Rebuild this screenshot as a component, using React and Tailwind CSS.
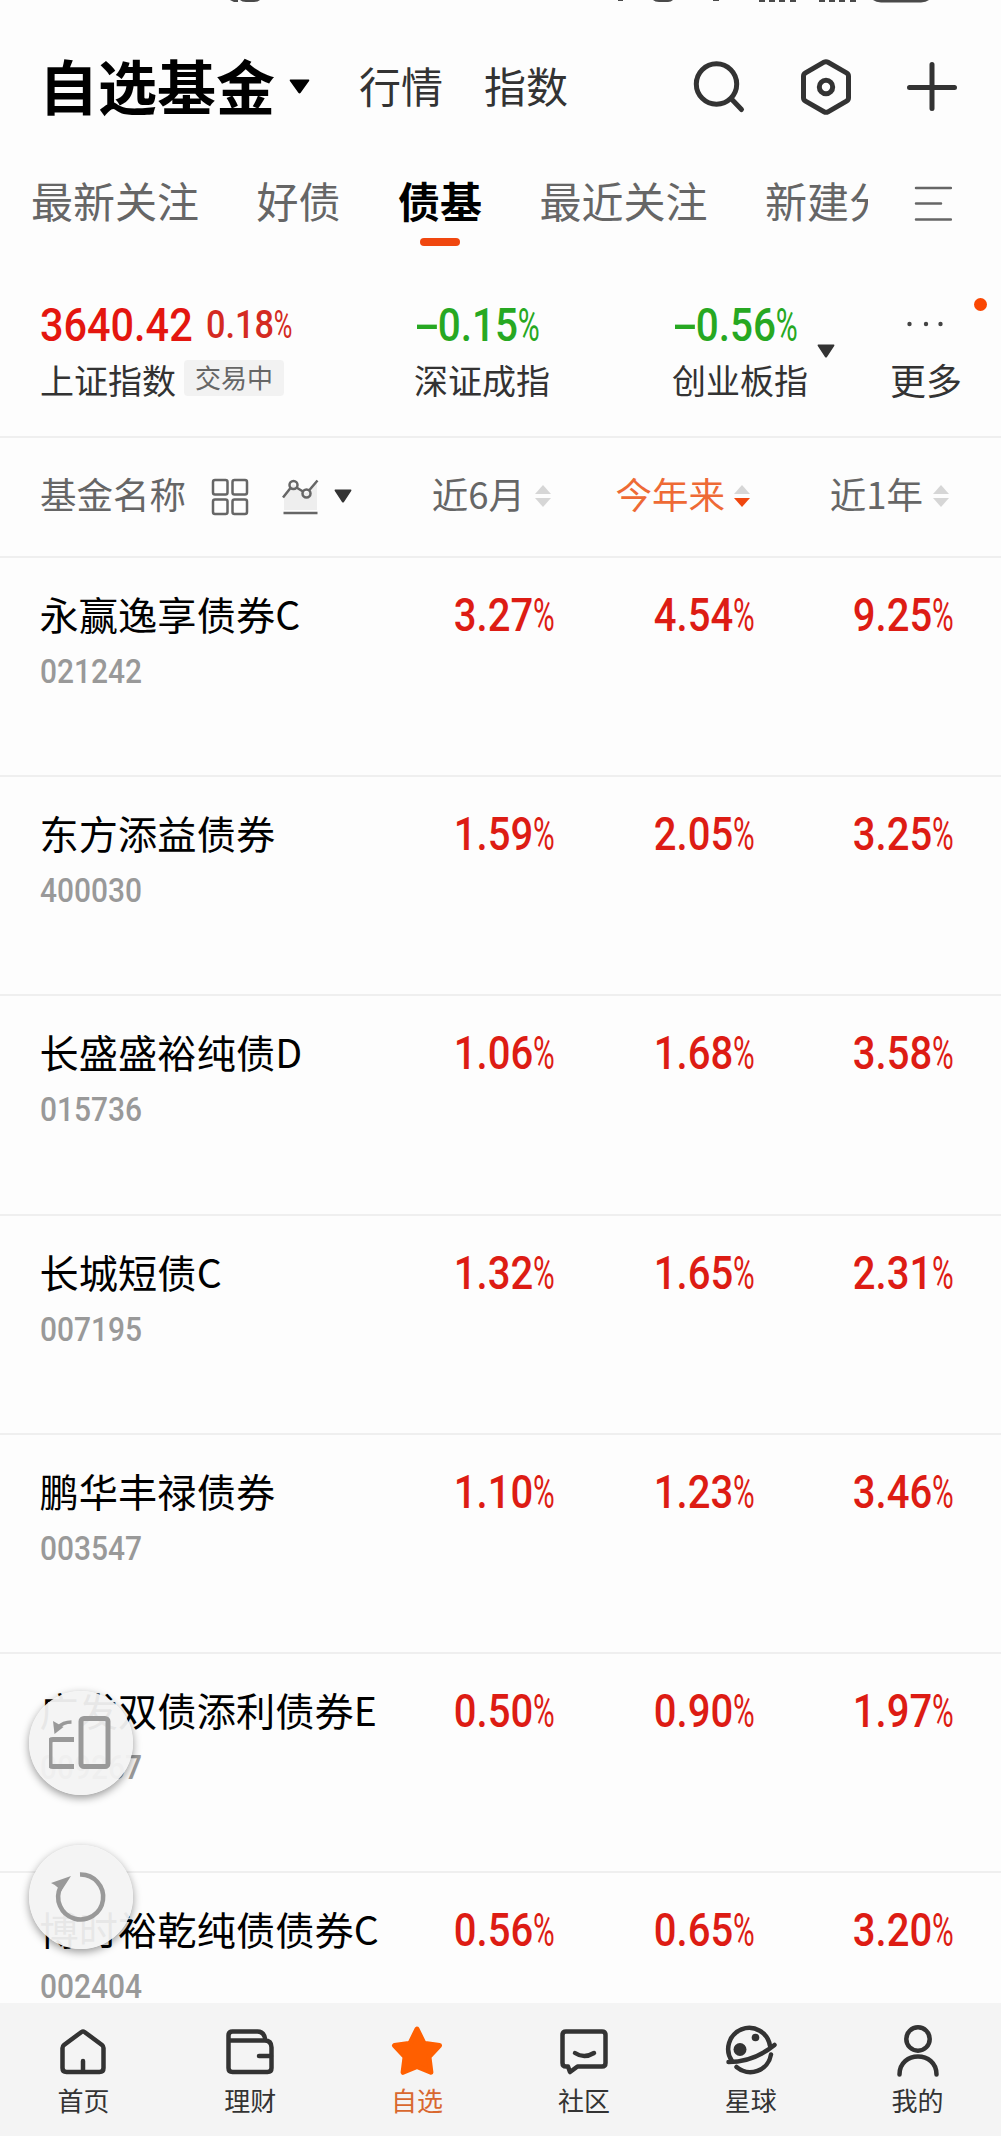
import React from 'react';

const tabs = ['最新关注', '好债', '债基', '最近关注', '新建分'];

const funds = [
  { name: '永赢逸享债券C', code: '021242', values: ['3.27', '4.54', '9.25'] },
  { name: '东方添益债券', code: '400030', values: ['1.59', '2.05', '3.25'] },
  { name: '长盛盛裕纯债D', code: '015736', values: ['1.06', '1.68', '3.58'] },
  { name: '长城短债C', code: '007195', values: ['1.32', '1.65', '2.31'] },
  { name: '鹏华丰禄债券', code: '003547', values: ['1.10', '1.23', '3.46'] },
  { name: '广发双债添利债券E', code: '009267', values: ['0.50', '0.90', '1.97'] },
  { name: '博时裕乾纯债债券C', code: '002404', values: ['0.56', '0.65', '3.20'] },
];

const Caret = ({ className }) => (
  <svg className={className} viewBox="0 0 18 14" fill="currentColor" preserveAspectRatio="none">
    <path d="M1.2 0.5h15.6q1 0.4 0.4 1.4l-7.2 11q-1 1.2-2 0l-7.2-11q-.6-1 .4-1.4z" />
  </svg>
);

const Percent = () => (
  <span className="inline-block w-[23px] origin-left scale-x-[0.74] font-normal">%</span>
);

const SortArrows = ({ active = false }) => (
  <svg className="w-[18px] h-6 shrink-0" viewBox="0 0 18 24">
    <path d="M9 1l8 9H1z" fill="#d6d6d6" />
    <path d="M9 23l8-9H1z" fill={active ? '#f0470f' : '#d6d6d6'} />
  </svg>
);

const StatusBar = () => (
  <svg className="block w-full h-[3px]" viewBox="0 0 1001 3" fill="#4a4a4a">
    <path d="M230 0h8v2h-4zM240 0h20q-2 2-6 2h-8q-4 0-6-2z" />
    <path d="M618 0h5v1h-5zM653 0h20q-2 2-5 2h-9q-4 0-6-2zM713 0h6v1h-6z" />
    <path d="M759 0h6v2h-6zM769 0h6v2h-6zM779 0h6v2h-6zM790 0h6v2h-6z" />
    <path d="M819 0h6v2h-6zM829 0h6v2h-6zM839 0h6v2h-6zM850 0h6v2h-6z" />
    <path d="M873 0h56q-3 2.4-8 2.4h-40q-5 0-8-2.4z" />
  </svg>
);

const Header = () => (
  <header className="flex items-center h-[167px] pl-[39px] pr-[43px] text-[#333]">
    <h1 className="pb-[5px] text-[59px] leading-none font-bold text-black">自选基金</h1>
    <Caret className="w-[21px] h-[15px] ml-[14px] text-black" />
    <span className="pb-[3px] ml-[49px] text-[42px] leading-none">行情</span>
    <span className="pb-[3px] ml-[41px] text-[42px] leading-none">指数</span>
    <div className="flex items-center ml-auto">
      <svg className="w-[54px] h-[54px]" viewBox="0 0 54 54" fill="none" stroke="currentColor" strokeWidth="5" strokeLinecap="round">
        <circle cx="23.500" cy="24" r="20.200" />
        <path d="M38.500 39l10 10.500" />
      </svg>
      <svg className="w-[54px] h-[58px] ml-[52px]" viewBox="0 0 54 58" fill="none" stroke="currentColor" strokeWidth="5" strokeLinejoin="round">
        <path d="M25 4.200q2-1.100 4 0l18.500 10.600q2 1.200 2 3.400v21.600q0 2.200-2 3.400l-18.500 10.600q-2 1.100-4 0l-18.500-10.600q-2-1.200-2-3.400v-21.600q0-2.200 2-3.400z" />
        <circle cx="27" cy="29" r="6.700" />
      </svg>
      <svg className="w-[52px] h-[52px] ml-[53px]" viewBox="0 0 52 52" fill="none" stroke="currentColor" strokeWidth="5" strokeLinecap="round">
        <path d="M26 3.500v44M3.500 26.500h45" />
      </svg>
    </div>
  </header>
);

const TabBar = () => (
  <nav className="flex items-start h-[92px] pl-[31px] text-[42px] leading-[60px] text-[#666]">
    <div className="flex gap-[57.500px] w-[837px] h-[92px] overflow-hidden whitespace-nowrap">
      {tabs.map((tab) =>
        tab === '债基' ? (
          <div key={tab} className="flex flex-col items-center shrink-0 font-bold text-black">
            {tab}
            <span className="w-10 h-2 mt-2 rounded-full bg-[#f0470f]" />
          </div>
        ) : (
          <div key={tab} className="shrink-0">{tab}</div>
        )
      )}
    </div>
    <svg className="w-[38px] h-9 ml-[46px] mt-4" viewBox="0 0 38 36" fill="none" stroke="#666" strokeWidth="2.500" strokeLinecap="round">
      <path d="M2 2h35M2 17.500h25M2 33.500h35" />
    </svg>
  </nav>
);

const IndexItem = ({ value, label, className }) => (
  <div className={className}>
    <div className="h-12 whitespace-nowrap font-[Roboto] text-[46px] leading-[48px] font-medium text-[#27a822]">
      <span className="inline-block origin-left scale-x-[0.88]">
        <span className="inline-block w-[27px] origin-left scale-x-[1.9]">-</span>
        {value}<Percent />
      </span>
    </div>
    <div className="mt-[7px] text-[34px] leading-[48px]">{label}</div>
  </div>
);

const IndexStrip = () => (
  <section className="flex h-[176px] pl-10 pt-[39px] border-b-2 border-[#efefef] text-[#333]">
    <div className="w-[374px]">
      <div className="flex h-12 whitespace-nowrap font-[Roboto] leading-[48px] text-[#e4160f]">
        <span className="w-[166px]">
          <span className="inline-block origin-left scale-x-[0.9] text-[46px] font-medium">3640.42</span>
        </span>
        <span className="inline-block origin-left scale-x-[0.88] text-[39px] font-medium text-[#d42a22]">
          0.18<Percent />
        </span>
      </div>
      <div className="flex mt-[7px]">
        <span className="text-[34px] leading-[48px]">上证指数</span>
        <span className="h-9 px-[11px] mt-[4px] ml-2 rounded bg-[#f2f2f2] text-[26px] leading-[34px] text-[#666]">交易中</span>
      </div>
    </div>
    <IndexItem value="0.15" label="深证成指" className="w-[258px]" />
    <IndexItem value="0.56" label="创业板指" className="w-[136px]" />
    <Caret className="w-[18px] h-[14px] mt-[43px] ml-[9px]" />
    <div className="relative flex flex-col w-[72px] ml-[55px]">
      <svg className="w-[36px] h-4 mt-[15px] ml-[17px]" viewBox="0 0 36 16" fill="#444">
        <circle cx="2.500" cy="8" r="2.200" />
        <circle cx="19" cy="8" r="2.200" />
        <circle cx="33.500" cy="8" r="2.200" />
      </svg>
      <span className="mt-[23px] text-[36px] leading-[48px]">更多</span>
      <span className="absolute -right-[25px] top-[-3px] w-[13px] h-[13px] rounded-full bg-[#fa4703]" />
    </div>
  </section>
);

const TableHead = () => (
  <div className="flex items-center h-[120px] pl-10 border-b-2 border-[#efefef] text-[36.500px] leading-none text-[#666]">
    <span className="pb-[5px]">基金名称</span>
    <svg className="w-[38px] h-[38px] ml-[25px]" viewBox="0 0 38 38" fill="none" stroke="#666" strokeWidth="2.500">
      <rect x="2" y="2" width="14.500" height="14.500" rx="2" />
      <rect x="21.500" y="2" width="14.500" height="14.500" rx="2" />
      <rect x="2" y="21.500" width="14.500" height="14.500" rx="2" />
      <rect x="21.500" y="21.500" width="14.500" height="14.500" rx="2" />
    </svg>
    <svg className="w-[38px] h-[38px] ml-[32px]" viewBox="0 0 38 38" fill="none" stroke="#666" strokeWidth="2.500">
      <path d="M3 19l9-13 13 9 11-10v27H3z" fill="#eee" stroke="none" />
      <path d="M2 19.500l7.500-9.500M15.500 9.500l6.500 4M28 12.500l8.500-10" />
      <circle cx="12.500" cy="7" r="4" />
      <circle cx="25.500" cy="15.500" r="4" />
      <path d="M2.500 35h34" />
    </svg>
    <Caret className="w-[18px] h-[14px] ml-[15px] mb-[2px] text-[#333]" />
    <div className="flex items-center justify-end gap-[9px] w-[200px] pb-[2px]"><span className="pb-[3px]">近6月</span><SortArrows /></div>
    <div className="flex items-center justify-end gap-2 w-[199px] pb-[2px] text-[#ee6a35]"><span className="pb-[3px]">今年来</span><SortArrows active /></div>
    <div className="flex items-center justify-end gap-[9px] w-[199px] pb-[2px]"><span className="pb-[3px]">近1年</span><SortArrows /></div>
  </div>
);

const FundRow = ({ fund }) => (
  <div className="flex h-[219.200px] pl-[39.500px] border-b-2 border-[#efefef]">
    <div className="w-[314.500px] pt-[26px] whitespace-nowrap">
      <div className="text-[39.200px] leading-[58px] tracking-[0.100px] text-black">{fund.name}</div>
      <div className="mt-1 font-[Roboto] text-[34px] leading-[50px] font-medium text-[#999]">
        <span className="inline-block origin-left scale-x-[0.88]">{fund.code}</span>
      </div>
    </div>
    {fund.values.map((value, i) => (
      <div key={i} className="w-[199.500px] pt-[28px] text-right whitespace-nowrap font-[Roboto] text-[46px] leading-[58px] font-medium text-[#dd1c14]">
        <span className="inline-block origin-right scale-x-[0.87]">{value}<Percent /></span>
      </div>
    ))}
  </div>
);

const FloatingButtons = () => (
  <div className="absolute left-[29px] top-[1691px] flex flex-col gap-[50px]">
    <button className="flex items-center justify-center w-[104px] h-[104px] rounded-full bg-[#f3f3f3]/95 shadow-[0_3px_8px_rgba(0,0,0,0.4)]">
      <svg className="w-16 h-[54px]" viewBox="0 0 64 54" fill="none" stroke="#999" strokeWidth="5">
        <rect x="32" y="2.500" width="27" height="48" rx="3" />
        <path d="M25 23.500H4q-3 0-3 3V47.500q0 3 3 3H25" />
        <path d="M9 11.500q5-5.500 13.500-5.500" strokeWidth="3.500" />
        <path d="M4 5l1.500 13 9-7z" fill="#999" stroke="none" />
      </svg>
    </button>
    <button className="flex items-center justify-center w-[104px] h-[104px] rounded-full bg-[#f3f3f3]/95 shadow-[0_3px_8px_rgba(0,0,0,0.4)]">
      <svg className="w-[60px] h-[56px]" viewBox="0 0 60 56" fill="none" stroke="#999" strokeWidth="4.500">
        <path d="M29 5.500a22.500 22.500 0 1 1-19.500 12.500" />
        <path d="M0 14l20-7-11 17q0-6-9-10z" fill="#999" stroke="none" />
      </svg>
    </button>
  </div>
);

const navItems = [
  {
    label: '首页',
    icon: (
      <>
        <path d="M25.500 6q1.500-1 3 0L46 19q1.500 1.200 1.500 3v20q0 4-4 4h-33q-4 0-4-4V22q0-1.800 1.500-3z" />
        <path d="M27 45V35" />
      </>
    ),
  },
  {
    label: '理财',
    icon: (
      <>
        <path d="M5.500 15V9.500q0-4 4-4h25q7 0 8 9M5.500 14.500h36q7 0 7 7V42q0 4-4 4h-35q-4 0-4-4V14" />
        <path d="M48 30H36" />
      </>
    ),
  },
  {
    label: '自选',
    active: true,
    icon: (
      <path
        d="M27 3l6.500 13.300q.6 1 1.700 1.200l14.300 2-9.800 10.500q-.8.900-.6 2l1.800 14.300-12.800-5.400q-1.100-.5-2.200 0l-12.800 5.400 1.800-14.300q.2-1.100-.6-2L4.500 19.500l14.300-2q1.100-.2 1.700-1.200z"
        fill="currentColor"
        strokeWidth="5"
        strokeLinejoin="round"
      />
    ),
  },
  {
    label: '社区',
    icon: (
      <>
        <path d="M9 5.500h36q3.500 0 3.500 3.500v28q0 3.500-3.500 3.500H20.500l-7.500 5.500-2-5.500H9q-3.500 0-3.500-3.500V9q0-3.500 3.500-3.500z" strokeLinejoin="round" />
        <path d="M18 27q9 6 19 0" />
      </>
    ),
  },
  {
    label: '星球',
    icon: (
      <>
        <path d="M8 35A21 21 0 1 1 46 20" />
        <path d="M4.500 36q25 0 46-17" />
        <path d="M47 28.500A21 21 0 0 1 12.500 41" />
        <circle cx="16" cy="23.500" r="6.500" fill="currentColor" stroke="none" />
        <circle cx="31.500" cy="11.500" r="3.800" fill="currentColor" stroke="none" />
      </>
    ),
  },
  {
    label: '我的',
    icon: (
      <>
        <circle cx="27" cy="13" r="11.700" />
        <path d="M8.500 48.500c0-24 37-24 37 0" />
      </>
    ),
  },
];

const BottomNav = () => (
  <nav className="absolute inset-x-0 bottom-0 grid grid-cols-6 h-[133px] bg-[#f4f4f4] text-[#333]">
    {navItems.map((item) => (
      <div key={item.label} className={item.active ? 'flex flex-col items-center text-[#ff5f00]' : 'flex flex-col items-center'}>
        <svg className="w-[54px] h-[54px] mt-[23px] overflow-visible" viewBox="0 0 54 54" fill="none" stroke="currentColor" strokeWidth="4.500" strokeLinecap="round">
          {item.icon}
        </svg>
        <span className={item.active ? 'mt-[2px] text-[26px] leading-[36px] text-[#d9682f]' : 'mt-[2px] text-[26px] leading-[36px]'}>
          {item.label}
        </span>
      </div>
    ))}
  </nav>
);

const App = () => (
  <div className="relative w-[1001px] h-[2136px] overflow-hidden bg-[#fdfdfd] font-['Noto_Sans_CJK_SC',sans-serif]">
    <StatusBar />
    <Header />
    <TabBar />
    <IndexStrip />
    <TableHead />
    {funds.map((fund) => (
      <FundRow key={fund.code} fund={fund} />
    ))}
    <FloatingButtons />
    <BottomNav />
  </div>
);

export default App;
